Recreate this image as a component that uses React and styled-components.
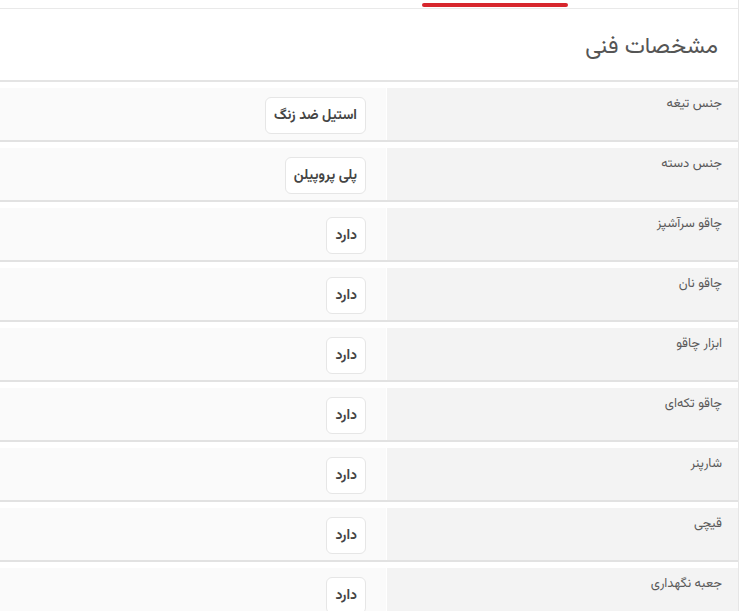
import React from "react";
import styled, { createGlobalStyle } from "styled-components";

const Global = createGlobalStyle`
  html, body { margin: 0; padding: 0; background: #ffffff; }
  body { font-family: "Vazirmatn", "Noto Sans Arabic", "Noto Naskh Arabic", "DejaVu Sans", sans-serif; }
  * { box-sizing: border-box; }
`;

const Page = styled.div`
  width: 750px;
  height: 611px;
  overflow: hidden;
  padding-right: 11px;
  direction: rtl;
`;

const Card = styled.section`
  border-right: 1px solid #e6e6e6;
  background: #ffffff;
`;

const TabBar = styled.div`
  display: flex;
  height: 9px;
  padding-right: 170px;
  border-bottom: 1px solid #e9e9e9;
`;

const TabIndicator = styled.div`
  width: 146px;
  height: 4px;
  margin-top: 3px;
  border-radius: 2px;
  background: #d7262d;
`;

const Header = styled.div`
  height: 73px;
  display: flex;
  align-items: center;
  padding: 4px 20px 0 0;
  border-bottom: 2px solid #e4e4e4;
`;

const Title = styled.h2`
  margin: 0;
  font-size: 23px;
  font-weight: 400;
  color: #555555;
`;

const List = styled.div`
  display: flex;
  flex-direction: column;
`;

const Row = styled.div`
  display: grid;
  grid-template-columns: 351px 1fr;
  column-gap: 1px;
  padding-top: 6px;
  border-bottom: 2px solid #e2e2e2;
`;

const Label = styled.div`
  height: 52px;
  background: #f3f3f3;
  padding: 7px 16px 0 0;
  font-size: 13px;
  line-height: 18px;
  color: #5a5a5a;
`;

const Value = styled.div`
  height: 52px;
  background: #fafafa;
  padding: 9px 20px 0 0;
  display: flex;
  align-items: flex-start;
`;

const Chip = styled.span`
  display: inline-flex;
  align-items: center;
  height: 37px;
  padding: 0 8px;
  background: #ffffff;
  border: 1px solid #e6e6e6;
  border-radius: 6px;
  font-size: 14px;
  font-weight: 700;
  color: #444444;
  white-space: nowrap;
`;

const specs = [
  ["جنس تیغه", "استیل ضد زنگ"],
  ["جنس دسته", "پلی پروپیلن"],
  ["چاقو سرآشپز", "دارد"],
  ["چاقو نان", "دارد"],
  ["ابزار چاقو", "دارد"],
  ["چاقو تکه‌ای", "دارد"],
  ["شارپنر", "دارد"],
  ["قیچی", "دارد"],
  ["جعبه نگهداری", "دارد"],
];

export default function App() {
  return (
    <>
      <Global />
      <Page>
        <Card>
          <TabBar>
            <TabIndicator />
          </TabBar>
          <Header>
            <Title>مشخصات فنی</Title>
          </Header>
          <List>
            {specs.map(([label, value]) => (
              <Row key={label}>
                <Label>{label}</Label>
                <Value>
                  <Chip>{value}</Chip>
                </Value>
              </Row>
            ))}
          </List>
        </Card>
      </Page>
    </>
  );
}
